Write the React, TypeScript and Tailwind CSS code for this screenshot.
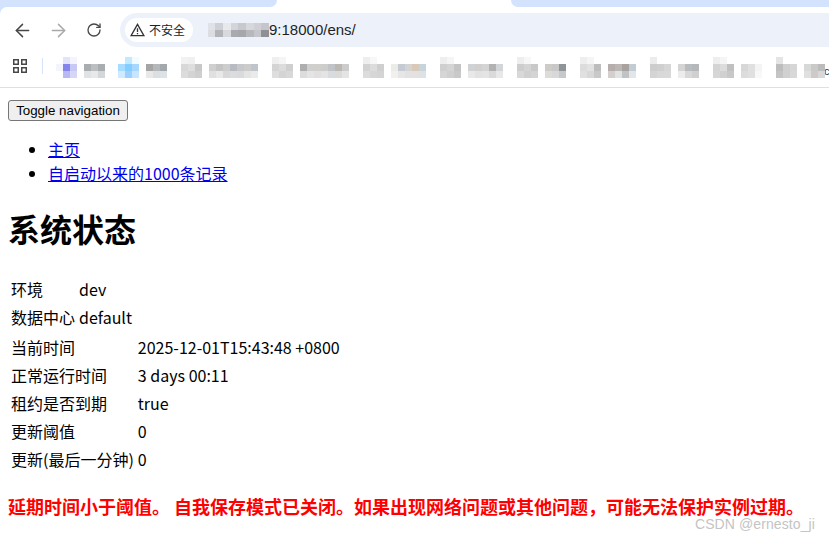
import { ArrowLeft, ArrowRight, RotateCw } from "lucide-react";

const cjk = "font-['Noto_Sans_CJK_SC','Noto_Sans',sans-serif]";

// blurred bookmark bar: 3x3 icon cells then two rows of text cells (7px mosaic)
const g = "#ffffff";
const bookmarks: { gap: string; icon: string[]; top: string[]; bottom: string[] }[] = [
  { gap: "ml-[13px]", icon: [g, "#e3e3fb", "#f4f4fe", "#f4f4fe", "#8484ea", "#c8c8f5", g, "#b8b8f4", "#d6d6f8"], top: ["#a9adb0", "#bcbfc2", "#a9adb0"], bottom: ["#dfe3e6", "#e6e8ea", "#d3d7da"] },
  { gap: "ml-[13px]", icon: [g, "#bfeaff", "#f2fbff", "#a6dcff", "#85ccff", "#a6d8ff", "#d0eaff", "#9cd0ff", "#c9e4ff"], top: ["#a5a5a5", "#b4b8ba", "#a2a8ac"], bottom: ["#e8e8e8", "#dcdfe1", "#dde2e6"] },
  { gap: "ml-[14px]", icon: ["#f2f2f2", "#f0f0f0", g, "#d8d8d8", "#dedede", "#c8c8c8", "#dcdcdc", "#d4d4d4", "#cfcfcf"], top: ["#cfcfcf", "#c4c4c4", "#cdcdcd", "#b8bcc2", "#c6c8cc", "#cccccc", "#bfc5cb"], bottom: ["#e0e0e0", "#e8e8e8", "#d8d8d8", "#dadcde", "#d8dadc", "#e4e4e4", "#eaeaea"] },
  { gap: "ml-[14px]", icon: ["#efefef", "#f5f5f5", g, "#d4d4d4", "#dcdcdc", "#cfcfcf", "#dedede", "#d4d4d4", "#d8d8d8"], top: ["#aeaeae", "#cfcfcf", "#d1cfcc", "#cdcdcd", "#c0c4c6", "#bbb7b3", "#cccccc"], bottom: ["#dcdcdc", "#e4e4e4", "#e0e0e0", "#e4e4e4", "#d8dcde", "#dadada", "#e4e4e4"] },
  { gap: "ml-[14px]", icon: ["#eeeeee", "#f7f7f7", g, "#d2d2d2", "#dcdcdc", "#cfcfcf", "#dcdcdc", "#d6d6d6", "#d4d4d4"], top: ["#ecece6", "#c6cad2", "#d4d4d4", "#d8c9b8", "#c8d4dc"], bottom: ["#f2f0ee", "#e6e6e6", "#e2e2e2", "#e2e2e2", "#dde2e6"] },
  { gap: "ml-[14px]", icon: ["#eeeeee", "#f5f5f5", g, "#cfcfcf", "#d4d4d4", "#c4c4c4", "#d6d6d6", "#d0d0d0", "#c9c9c9"], top: ["#d0d2d4", "#d2d0ce", "#d4d4d4", "#b2b2b2", "#d2d6d8"], bottom: ["#e8e8e8", "#e2e2e2", "#e4e4e4", "#dadada", "#e8e8e8"] },
  { gap: "ml-[14px]", icon: ["#eeeeee", "#f7f7f7", g, "#cdcdcd", "#d4d4d4", "#c9c9c9", "#d8d8d8", "#d0d0d0", "#d4d4d4"], top: ["#cfccc8", "#c8c8c8", "#8f9498"], bottom: ["#dedcd8", "#d8d8d8", "#c8c8c8"] },
  { gap: "ml-[14px]", icon: ["#eeeeee", "#f5f5f5", g, "#dcdcdc", "#e2e2e2", "#bdbdbd", "#e0e0e0", "#d8d8d8", "#c8c8c8"], top: ["#b5aeac", "#bcb6b4", "#a9a39f", "#c2ccd2"], bottom: ["#d4cfcd", "#dfe3e4", "#bfc3c6", "#e2e6e8"] },
  { gap: "ml-[14px]", icon: ["#ececec", g, g, "#cdcdcd", "#cfcfcf", "#d6d6d6", "#d4d4d4", "#d8d8d8", "#d9d9d9"], top: ["#d4d4d4", "#b8bcbe", "#b4b8ba"], bottom: ["#ececec", "#d8d8d8", "#d0d0d0"] },
  { gap: "ml-[14px]", icon: ["#eeeeee", "#f5f5f5", g, "#d4d4d4", "#dcdcdc", "#c0c0c0", "#d6d6d6", "#d0d0d0", "#c8c8c8"], top: ["#d9d7d5", "#e0e0e0", "#f4f4f4"], bottom: ["#dcdcdc", "#e0e0e0", "#f8f8f8"] },
  { gap: "ml-[14px]", icon: ["#e4e4e4", g, g, "#bdbdbd", "#d0d0d0", "#d6d6d6", "#c4c4c4", "#d0d0d0", "#d8d8d8"], top: ["#d8d8d8", "#c9c9c9", "#bcbcbc"], bottom: ["#e0e0e0", "#cfcac8", "#d8d8d8"] },
];

function Mosaic({ item }: { item: (typeof bookmarks)[number] }) {
  return (
    <div className={`${item.gap} flex shrink-0 gap-[7px] blur-[0.6px]`}>
      <div className="grid grid-cols-[repeat(3,7px)] auto-rows-[7px]">
        {item.icon.map((c, i) => (
          <div key={i} style={{ background: c }} />
        ))}
      </div>
      <div className="mt-[7px]">
        <div className="flex h-[7px]">
          {item.top.map((c, i) => (
            <div key={i} className="w-[7px]" style={{ background: c }} />
          ))}
        </div>
        <div className="flex h-[7px]">
          {item.bottom.map((c, i) => (
            <div key={i} className="w-[7px]" style={{ background: c }} />
          ))}
        </div>
      </div>
    </div>
  );
}

function BrowserChrome() {
  return (
    <div className="h-[88px] border-b border-[#e0e0e0] bg-[#d3e3fd]">
      <div className="h-[7px] flex bg-white">
        <div className="w-[277px] bg-[#d3e3fd] rounded-br-[8px]" />
        <div className="w-[234px]" />
        <div className="flex-1 bg-[#d3e3fd] rounded-bl-[8px]" />
      </div>
      <div className="h-[40px] pt-[6px] flex items-start bg-white rounded-tl-[7px]">
        <ArrowLeft className="ml-[12px] mt-[7px] text-[#474747]" size={21} strokeWidth={1.7} />
        <ArrowRight className="ml-[15px] mt-[7px] text-[#a9a9a9]" size={21} strokeWidth={1.7} />
        <RotateCw className="ml-[17px] mt-[9px] text-[#474747]" size={16} strokeWidth={2} />
        <div className="ml-[18px] flex-1 h-[34px] rounded-l-[17px] bg-[#edf2fa] flex items-center">
          <div className="ml-[5px] h-[24px] w-[68px] rounded-[12px] bg-white flex items-center">
            <svg className="ml-[5px]" width="15" height="14" viewBox="0 0 15 14" fill="none" stroke="#333" strokeWidth="1.3">
              <path d="M7.5 1.4 L13.9 12.6 H1.1 Z" />
              <path d="M7.5 5.2 V9 M7.5 9.9 V11.2" />
            </svg>
            <span className={`ml-[4px] text-[12px] text-[#222] ${cjk}`}>不安全</span>
          </div>
          <div className="ml-[7px] w-[69px] h-[14px] grid grid-cols-9 grid-rows-2 blur-[0.6px]">
            {["#edf2fa", "#e0e2ea", "#cfd0d6", "#e9e9ec", "#d4d5da", "#c8c9cf", "#d7d7dc", "#cfd0d5", "#c5c6cb", "#edf2fa", "#dcdde2", "#b3b4ba", "#d8d9de", "#a9aab0", "#a6a7ad", "#b7b8bd", "#c5c6cb", "#8f9096"].map((c, i) => (
              <div key={i} style={{ background: c }} />
            ))}
          </div>
          <span className="text-[15px] text-[#1f1f1f] font-['Liberation_Sans',sans-serif]">9:18000/ens/</span>
        </div>
      </div>
      <div className="h-[40px] flex items-start overflow-hidden bg-white">
        <svg className="ml-[13px] mt-[12px] shrink-0" width="14" height="14" viewBox="0 0 14 14" fill="none" stroke="#474747" strokeWidth="1.5">
          <rect x="0.75" y="0.75" width="4.5" height="4.5" />
          <rect x="8.75" y="0.75" width="4.5" height="4.5" />
          <rect x="0.75" y="8.75" width="4.5" height="4.5" />
          <rect x="8.75" y="8.75" width="4.5" height="4.5" />
        </svg>
        <div className="ml-[15px] mt-[11px] w-px h-[16px] bg-[#d6e2f5] shrink-0" />
        <div className="flex mt-[10px]">
          {bookmarks.map((b, i) => (
            <Mosaic key={i} item={b} />
          ))}
          <span className="-ml-[1px] mt-[6px] text-[11px] leading-[16px] text-[#333] font-['Liberation_Sans',sans-serif]">c</span>
        </div>
      </div>
    </div>
  );
}

const envRows = [
  ["环境", "dev"],
  ["数据中心", "default"],
];

const statusRows = [
  ["当前时间", "2025-12-01T15:43:48 +0800"],
  ["正常运行时间", "3 days 00:11"],
  ["租约是否到期", "true"],
  ["更新阈值", "0"],
  ["更新(最后一分钟)", "0"],
];

function InfoTable({ rows }: { rows: string[][] }) {
  return (
    <table className="border-separate border-spacing-[2px] text-[16px] leading-[24px] text-black">
      <tbody>
        {rows.map((r) => (
          <tr key={r[0]}>
            <td className="p-px">{r[0]}</td>
            <td className="p-px">{r[1]}</td>
          </tr>
        ))}
      </tbody>
    </table>
  );
}

export default function App() {
  return (
    <div className={`relative w-[829px] h-[539px] overflow-hidden bg-white ${cjk}`}>
      <BrowserChrome />
      <div className="px-2">
        <button className="mt-[12px] block h-[21px] w-[120px] rounded-[3px] border border-[#767676] bg-[#efefef] text-[13.33px] leading-none text-black font-['Liberation_Sans',sans-serif]">
          Toggle navigation
        </button>
        <ul className="mt-[16px] pl-[40px] list-disc text-[16px] leading-[24px]">
          <li>
            <a href="#" className="text-[#0000ee] underline">主页</a>
          </li>
          <li>
            <a href="#" className="text-[#0000ee] underline">自启动以来的1000条记录</a>
          </li>
        </ul>
        <h1 className="mt-[20px] text-[32px] leading-[46px] font-bold text-black">系统状态</h1>
        <div className="mt-[23px]">
          <InfoTable rows={envRows} />
          <InfoTable rows={statusRows} />
        </div>
        <h3 className="mt-[19px] text-[18px] leading-[27px] font-bold text-[#ff0000] whitespace-nowrap">
          延期时间小于阈值。 自我保存模式已关闭。如果出现网络问题或其他问题，可能无法保护实例过期。
        </h3>
      </div>
      <span className="absolute right-[14px] bottom-[8px] text-[14px] tracking-[0.1px] leading-none text-[#c4c4c4] font-['Liberation_Sans',sans-serif] font-light">
        CSDN @ernesto_ji
      </span>
    </div>
  );
}
